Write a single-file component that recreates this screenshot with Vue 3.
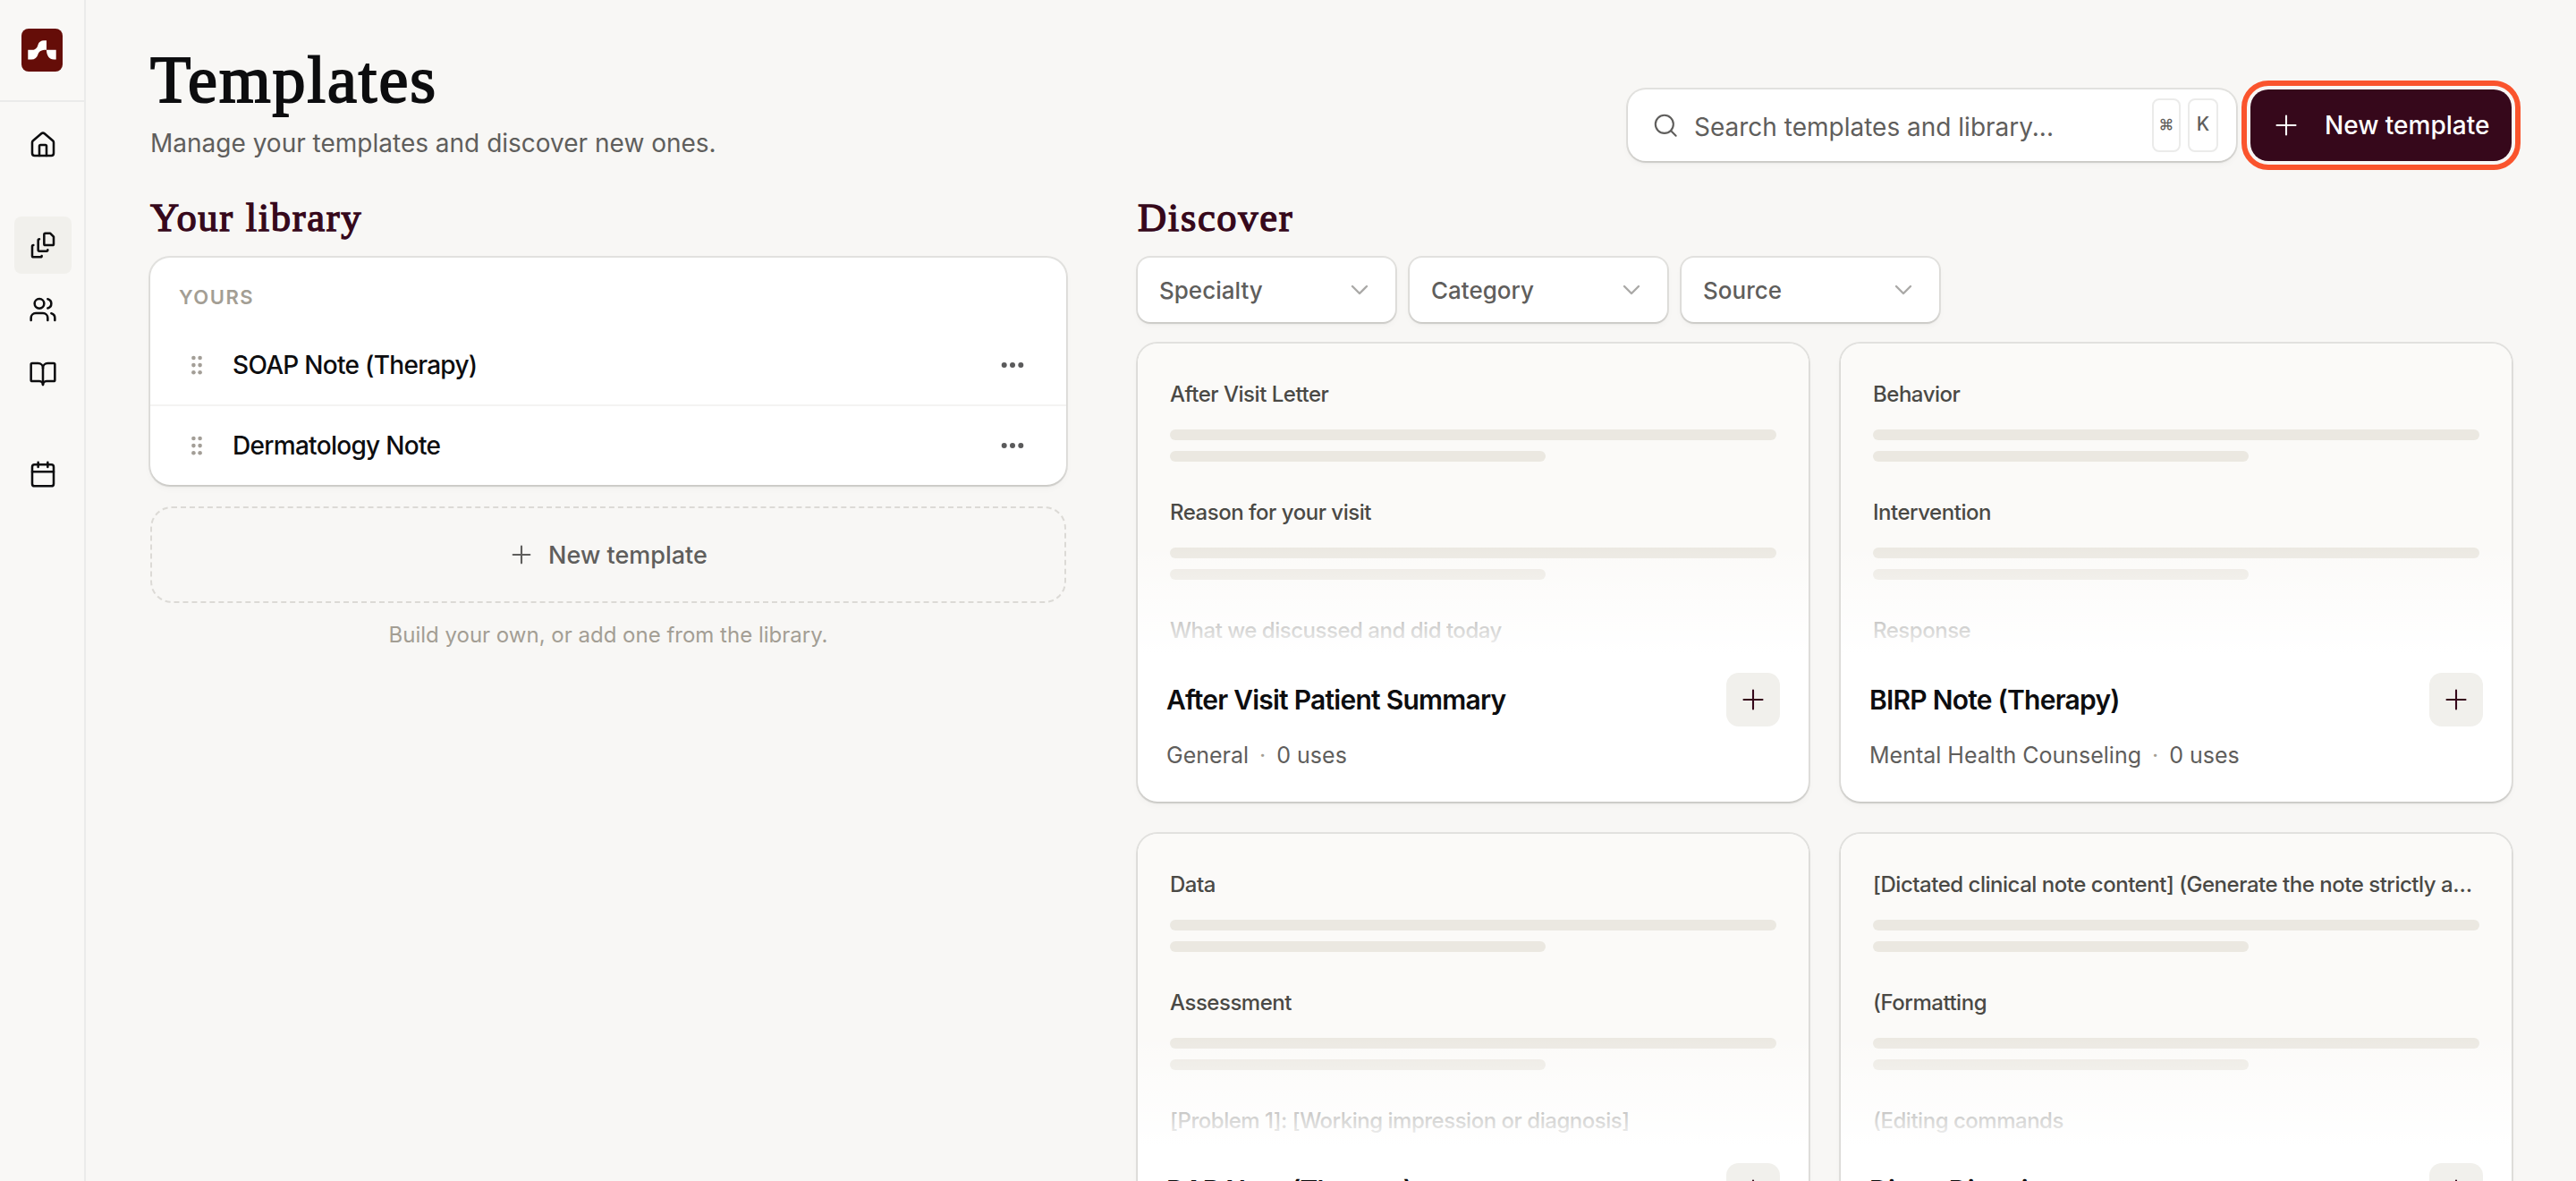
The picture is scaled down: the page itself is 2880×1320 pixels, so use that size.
<template>
  <div class="app">
    <aside class="sidebar">
      <div class="brand">
        <svg class="logo" viewBox="0 0 46 48">
          <rect width="46" height="48" rx="8" fill="#650d08" />
          <path
            d="M7.3 23.8H12C16.500 23.8 17.800 20.500 18.500 18C19.500 14.800 22 13.300 25 13.300H28V23.800H38.700V34.500H36.300C31 34.500 28 30 28 23.800C22 23.800 19.500 25.500 18.400 29C17.400 32.500 14.800 34.500 11 34.500H7.300Z"
            fill="#fff"
          />
        </svg>
      </div>
      <nav class="nav">
        <a
          v-for="item in navItems"
          :key="item.name"
          class="nav-item"
          :class="{ active: item.active, spaced: item.spaced }"
          :title="item.name"
        >
          <svg class="icon" viewBox="0 0 24 24">
            <path v-for="d in item.paths" :key="d" :d="d" />
          </svg>
        </a>
      </nav>
    </aside>

    <main class="main">
      <header class="header">
        <div>
          <h1>Templates</h1>
          <p class="subtitle">Manage your templates and discover new ones.</p>
        </div>
        <div class="actions">
          <div class="search">
            <svg class="search-icon" viewBox="0 0 24 24">
              <circle cx="11" cy="11" r="8.6" />
              <path d="m22 22-4.700-4.700" />
            </svg>
            <span class="placeholder">Search templates and library...</span>
            <kbd class="cmd">⌘</kbd>
            <kbd>K</kbd>
          </div>
          <button class="primary">
            <svg class="plus" viewBox="0 0 24 24"><path d="M3 12h18M12 3v18" /></svg>
            <span>New template</span>
          </button>
        </div>
      </header>

      <div class="columns">
        <section class="library">
          <h2>Your library</h2>
          <div class="panel">
            <div class="panel-label">YOURS</div>
            <div v-for="name in library" :key="name" class="row">
              <svg class="grip" viewBox="0 0 12 22">
                <circle v-for="n in 6" :key="n" :cx="n % 2 ? 2.4 : 9.600" :cy="3 + Math.floor((n - 1) / 2) * 8.100" r="2.3" />
              </svg>
              <span class="row-name">{{ name }}</span>
              <svg class="more" viewBox="0 0 26 8">
                <circle v-for="n in 3" :key="n" :cx="n * 9.3 - 5.600" cy="4" r="3" />
              </svg>
            </div>
          </div>
          <button class="dashed">
            <svg class="plus" viewBox="0 0 24 24"><path d="M4 12h16M12 4v16" /></svg>
            <span>New template</span>
          </button>
          <p class="hint">Build your own, or add one from the library.</p>
        </section>

        <section class="discover">
          <h2>Discover</h2>
          <div class="filters">
            <button v-for="filter in filters" :key="filter" class="filter">
              <span>{{ filter }}</span>
              <svg class="chevron" viewBox="0 0 24 24"><path d="m6 9 6 6 6-6" /></svg>
            </button>
          </div>
          <div class="cards">
            <article v-for="card in cards" :key="card.title" class="card">
              <div class="preview">
                <div v-for="heading in card.headings" :key="heading" class="block">
                  <div class="heading">{{ heading }}</div>
                  <div class="bar"></div>
                  <div class="bar short"></div>
                </div>
              </div>
              <div class="footer">
                <div class="footer-top">
                  <h3>{{ card.title }}</h3>
                  <button class="add">
                    <svg class="plus" viewBox="0 0 24 24"><path d="M3 12h18M12 3v18" /></svg>
                  </button>
                </div>
                <div class="meta">
                  <span>{{ card.specialty }}</span>
                  <span class="dot">·</span>
                  <span>0 uses</span>
                </div>
              </div>
            </article>
          </div>
        </section>
      </div>
    </main>
  </div>
</template>

<script setup>
import { ref } from 'vue'

const navItems = [
  {
    name: 'Home',
    paths: [
      'M15 21v-8a1 1 0 0 0-1-1h-4a1 1 0 0 0-1 1v8',
      'M3 10a2 2 0 0 1 .709-1.528l7-5.999a2 2 0 0 1 2.582 0l7 5.999A2 2 0 0 1 21 10v9a2 2 0 0 1-2 2H5a2 2 0 0 1-2-2z'
    ]
  },
  {
    name: 'Templates',
    active: true,
    spaced: true,
    paths: [
      'M14 2h4l3 3v6a1 1 0 0 1-1 1h-6a1 1 0 0 1-1-1V3a1 1 0 0 1 1-1z',
      'M9 7a1 1 0 0 0-1 1v8a1 1 0 0 0 1 1h6a1 1 0 0 0 1-1',
      'M4 12a1 1 0 0 0-1 1v8a1 1 0 0 0 1 1h6a1 1 0 0 0 1-1'
    ]
  },
  {
    name: 'Patients',
    paths: [
      'M16 21v-2a4 4 0 0 0-4-4H6a4 4 0 0 0-4 4v2',
      'M9 3a4 4 0 1 0 0 8 4 4 0 1 0 0-8z',
      'M22 21v-2a4 4 0 0 0-3-3.870',
      'M16 3.130a4 4 0 0 1 0 7.750'
    ]
  },
  {
    name: 'Library',
    paths: [
      'M12 7v14',
      'M3 18a1 1 0 0 1-1-1V4a1 1 0 0 1 1-1h5a4 4 0 0 1 4 4 4 4 0 0 1 4-4h5a1 1 0 0 1 1 1v13a1 1 0 0 1-1 1h-6a3 3 0 0 0-3 3 3 3 0 0 0-3-3z'
    ]
  },
  {
    name: 'Calendar',
    spaced: true,
    paths: [
      'M8 2v4M16 2v4M3 10h18',
      'M5 4h14a2 2 0 0 1 2 2v14a2 2 0 0 1-2 2H5a2 2 0 0 1-2-2V6a2 2 0 0 1 2-2z'
    ]
  }
]

const library = ref(['SOAP Note (Therapy)', 'Dermatology Note'])

const filters = ['Specialty', 'Category', 'Source']

const cards = ref([
  {
    title: 'After Visit Patient Summary',
    specialty: 'General',
    headings: ['After Visit Letter', 'Reason for your visit', 'What we discussed and did today']
  },
  {
    title: 'BIRP Note (Therapy)',
    specialty: 'Mental Health Counseling',
    headings: ['Behavior', 'Intervention', 'Response']
  },
  {
    title: 'DAP Note (Therapy)',
    specialty: 'Mental Health Counseling',
    headings: ['Data', 'Assessment', '[Problem 1]: [Working impression or diagnosis]']
  },
  {
    title: 'Direct Dictation',
    specialty: 'General',
    headings: [
      '[Dictated clinical note content] (Generate the note strictly as dictated)',
      '(Formatting',
      '(Editing commands'
    ]
  }
])
</script>

<style>
body {
  margin: 0;
  background: #f8f7f5;
}
</style>

<style scoped>
.app {
  display: flex;
  height: 1320px;
  overflow: hidden;
  box-sizing: border-box;
  background: #f8f7f5;
  color: #0d0d0f;
  font-family: Inter, sans-serif;
  font-size: 28px;
}

.app * {
  box-sizing: border-box;
}

h1,
h2,
h3,
p {
  margin: 0;
}

button {
  border: none;
  font: inherit;
}

svg {
  display: block;
  flex: none;
  fill: none;
  stroke-linecap: round;
  stroke-linejoin: round;
}

/* sidebar */
.sidebar {
  width: 96px;
  flex: none;
  border-right: 2px solid #ebebea;
  background: #f9f8f6;
}

.brand {
  height: 114px;
  padding: 32px 24px 0;
  border-bottom: 2px solid #ebebea;
}

.logo {
  width: 46px;
  height: 48px;
}

.nav {
  display: flex;
  flex-direction: column;
  gap: 8px;
  padding: 16px 14px 0 16px;
}

.nav-item {
  display: flex;
  align-items: center;
  justify-content: center;
  width: 64px;
  height: 64px;
  border-radius: 8px;
}

.nav-item.spaced {
  margin-top: 40px;
}

.nav-item.active {
  background: #f1f0ec;
}

.icon {
  width: 32px;
  height: 32px;
  stroke: #0d0d0f;
  stroke-width: 1.9;
}

/* page header */
.main {
  flex: 1;
  padding: 50px 72px 0;
}

.header {
  display: flex;
  align-items: flex-end;
  justify-content: space-between;
  height: 130px;
}

h1,
h2 {
  font-family: "Liberation Serif", serif;
  font-weight: 400;
}

h1 {
  font-size: 74px;
  line-height: 78px;
  letter-spacing: 2px;
  -webkit-text-stroke: 2px #0d0d0f;
}

h2 {
  height: 58px;
  margin-bottom: 16px;
  color: #36081b;
  font-size: 44.500px;
  line-height: 58px;
  letter-spacing: 1.7px;
  -webkit-text-stroke: 1.4px #36081b;
}

.subtitle {
  margin-top: 12px;
  color: #5f5e5c;
  line-height: 40px;
}

.actions {
  display: flex;
  gap: 16px;
}

.search {
  display: flex;
  align-items: center;
  width: 680px;
  height: 80px;
  padding: 0 20px 0 28px;
  border-radius: 20px;
}

.search,
.filter,
.panel,
.card {
  background: #fff;
  box-shadow: 0 0 0 2px rgba(40, 38, 30, 0.1), 0 2px 2px rgba(40, 38, 30, 0.1), 0 4px 8px rgba(40, 38, 30, 0.03);
}

.search-icon {
  width: 28px;
  height: 28px;
  stroke: #5f5e5c;
  stroke-width: 1.8;
}

.placeholder {
  flex: 1;
  margin-left: 18px;
  padding-top: 3px;
  color: #5f5e5c;
}

kbd {
  width: 34px;
  height: 60px;
  margin-left: 8px;
  border: 2px solid #ebebea;
  border-radius: 8px;
  color: #5f5e5c;
  font-family: Inter, sans-serif;
  font-size: 21px;
  font-weight: 500;
  line-height: 54px;
  text-align: center;
}

kbd.cmd {
  width: 32px;
  font-size: 17px;
}

.primary {
  display: flex;
  align-items: center;
  width: 292px;
  height: 80px;
  padding: 0 0 0 26px;
  border-radius: 20px;
  outline: 6px solid #fa542d;
  outline-offset: 4px;
  background: #36081b;
  color: #fff;
  font-weight: 500;
}

.plus {
  width: 28px;
  height: 28px;
  stroke: currentColor;
  stroke-width: 1.8;
}

.primary .plus {
  margin-right: 29px;
}

/* your library */
.columns {
  display: flex;
  gap: 80px;
  margin-top: 34px;
}

.library {
  width: 1024px;
  flex: none;
}

.panel {
  border-radius: 22px;
}

.panel-label {
  height: 76px;
  padding: 30px 32px 0;
  color: #a39e94;
  font-size: 22px;
  font-weight: 600;
  line-height: 28px;
  letter-spacing: 1.5px;
}

.row {
  display: flex;
  align-items: center;
  height: 88px;
  padding: 0 47px 0 46px;
}

.row + .row {
  height: 90px;
  border-top: 2px solid #f4f3f2;
}

.grip {
  width: 12px;
  height: 22px;
  fill: #a39e97;
}

.row-name {
  flex: 1;
  margin-left: 34px;
  font-weight: 500;
  letter-spacing: -0.7px;
}

.more {
  width: 26px;
  height: 8px;
  fill: #5a5a5b;
}

.dashed {
  display: flex;
  align-items: center;
  justify-content: center;
  gap: 16px;
  width: 100%;
  height: 108px;
  margin-top: 24px;
  border: 2px dashed #dcdad6;
  border-radius: 24px;
  background: none;
  color: #5f5e5c;
  font-size: 27px;
  font-weight: 500;
}

.hint {
  margin-top: 20px;
  color: #a39e94;
  font-size: 24px;
  line-height: 32px;
  text-align: center;
}

/* discover */
.discover {
  flex: 1;
}

.filters {
  display: flex;
  gap: 16px;
}

.filter {
  display: flex;
  align-items: center;
  justify-content: space-between;
  width: 288px;
  height: 72px;
  padding: 0 24px;
  border-radius: 14px;
  color: #5f5e5c;
  font-size: 26px;
  font-weight: 500;
}

.chevron {
  width: 32px;
  height: 32px;
  stroke: #aaa9a7;
  stroke-width: 1.8;
}

.cards {
  display: grid;
  grid-template-columns: 750px 750px;
  gap: 36px;
  margin-top: 24px;
}

.card {
  height: 512px;
  border-radius: 22px;
  overflow: hidden;
}

.preview {
  position: relative;
  height: 348px;
  padding: 36px 36px 0;
  overflow: hidden;
  background: #fbfaf8;
}

/* fades the sample headings into the footer */
.preview::after {
  content: "";
  position: absolute;
  inset: 224px 0 0;
  background: linear-gradient(rgba(255, 255, 255, 0), #fff);
}

.block {
  display: flex;
  flex-direction: column;
  gap: 12px;
  margin-bottom: 36px;
}

.heading {
  margin-bottom: 8px;
  padding-top: 2px;
  overflow: hidden;
  color: #4a4945;
  font-size: 24px;
  font-weight: 500;
  line-height: 38px;
  letter-spacing: -0.48px;
  text-overflow: ellipsis;
  white-space: nowrap;
}

.bar {
  height: 12px;
  border-radius: 6px;
  background: #ebe8e1;
}

.bar.short {
  width: 62%;
}

.footer {
  padding: 20px 32px 0;
}

.footer-top {
  display: flex;
  align-items: center;
  justify-content: space-between;
}

h3 {
  font-size: 30px;
  font-weight: 600;
  letter-spacing: -0.76px;
}

.add {
  display: flex;
  align-items: center;
  justify-content: center;
  width: 60px;
  height: 60px;
  padding: 0;
  border-radius: 14px;
  background: #f1f0ec;
  color: #36081b;
}

.meta {
  display: flex;
  gap: 12px;
  margin-top: 14px;
  color: #5f5e5c;
  font-size: 25px;
  line-height: 36px;
}

.dot {
  color: #a39e94;
}
</style>
